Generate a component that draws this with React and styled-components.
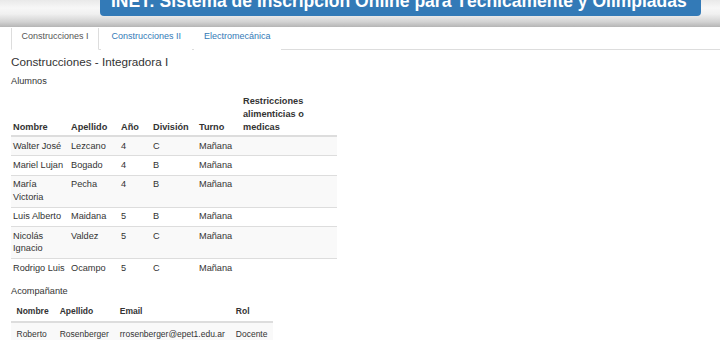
import styled, { createGlobalStyle } from "styled-components";

const GlobalStyle = createGlobalStyle`
  body {
    margin: 0;
    background: #fff;
    font-family: "Liberation Sans", Arial, sans-serif;
    color: #333;
  }
`;

const alumnos = [
  ["Walter José", "Lezcano", "4", "C", "Mañana"],
  ["Mariel Lujan", "Bogado", "4", "B", "Mañana"],
  ["María Victoria", "Pecha", "4", "B", "Mañana"],
  ["Luis Alberto", "Maidana", "5", "B", "Mañana"],
  ["Nicolás Ignacio", "Valdez", "5", "C", "Mañana"],
  ["Rodrigo Luis", "Ocampo", "5", "C", "Mañana"],
];

const columnas = [
  ["Nombre", 58],
  ["Apellido", 50],
  ["Año", 32],
  ["División", 46],
  ["Turno", 44],
  ["Restricciones alimenticias o medicas", 96],
];

const tabs = ["Construcciones I", "Construcciones II", "Electromecánica"];

export default function App() {
  return (
    <>
      <GlobalStyle />
      <Header>
        <Banner>INET: Sistema de Inscripción Online para Técnicamente y Olimpiadas</Banner>
      </Header>
      <Content>
        <Tabs>
          {tabs.map((t, i) => (
            <Tab key={t} $active={i === 0}>
              {t}
            </Tab>
          ))}
        </Tabs>
        <Heading>Construcciones - Integradora I</Heading>
        <Label>Alumnos</Label>
        <StudentTable>
          <colgroup>
            {columnas.map(([name, w]) => (
              <col key={name} style={{ width: w }} />
            ))}
          </colgroup>
          <thead>
            <tr>
              {columnas.map(([name]) => (
                <th key={name}>{name}</th>
              ))}
            </tr>
          </thead>
          <tbody>
            {alumnos.map((row) => (
              <tr key={row[0]}>
                {row.map((c, i) => (
                  <td key={i}>{c}</td>
                ))}
                <td />
              </tr>
            ))}
          </tbody>
        </StudentTable>
        <Label>Acompañante</Label>
        <CompanionTable>
          <thead>
            <tr>
              <th>Nombre</th>
              <th>Apellido</th>
              <th>Email</th>
              <th>Rol</th>
            </tr>
          </thead>
          <tbody>
            <tr>
              <td>Roberto</td>
              <td>Rosenberger</td>
              <td>rrosenberger@epet1.edu.ar</td>
              <td>Docente</td>
            </tr>
          </tbody>
        </CompanionTable>
      </Content>
    </>
  );
}

const Header = styled.header`
  position: relative;
  z-index: 2;
  display: flex;
  align-items: flex-start;
  height: 28px;
  padding-left: 100px;
  overflow: hidden;
  background: linear-gradient(
    to bottom,
    #e9e9e9 0px,
    #f7f7f7 8px,
    #f0f0f0 14px,
    #d2d2d2 22px,
    #b5b5b5 27px,
    #fff 27px
  );
`;

const Banner = styled.div`
  box-sizing: border-box;
  width: 601px;
  margin-top: -10px;
  padding: 0 0 4px 11px;
  background: #337ab7;
  border-radius: 0 0 4px 4px;
  color: #fff;
  font-size: 17.5px;
  font-weight: bold;
  line-height: 22px;
  white-space: nowrap;
  overflow: hidden;
`;

const Content = styled.main`
  padding-left: 11px;
`;

const Tabs = styled.nav`
  display: flex;
  margin-top: -5px;
  border-bottom: 1px solid #ddd;
`;

const Tab = styled.a`
  margin: 0 2px -1px 0;
  padding: 6px 9.5px;
  font-size: 9px;
  line-height: 13px;
  border: 1px solid ${(p) => (p.$active ? "#ddd" : "transparent")};
  border-bottom-color: transparent;
  border-radius: 3px 3px 0 0;
  background: #fff;
  color: ${(p) => (p.$active ? "#555" : "#337ab7")};
  cursor: pointer;
`;

const Heading = styled.h4`
  margin: 5px 0 6px;
  font-size: 11.7px;
  font-weight: normal;
  line-height: 14px;
`;

const Label = styled.p`
  margin: 0 0 4px;
  font-size: 9.2px;
  line-height: 13px;
`;

const BaseTable = styled.table`
  border-collapse: collapse;
  border-spacing: 0;

  th {
    text-align: left;
    vertical-align: bottom;
    font-weight: bold;
    border-bottom: 2px solid #ddd;
  }
  td {
    vertical-align: top;
    border-top: 1px solid #ddd;
  }
  tbody tr:nth-child(odd) {
    background: #f9f9f9;
  }
`;

const StudentTable = styled(BaseTable)`
  table-layout: fixed;
  width: 326px;
  margin: 1px 0 8px;
  font-size: 9.2px;

  th {
    padding: 3px 2px 1px;
    line-height: 13px;
  }
  td {
    padding: 2.8px 2px;
    line-height: 12.7px;
  }
`;

const CompanionTable = styled(BaseTable)`
  margin-top: 0;
  font-size: 8.5px;
  line-height: 12px;

  th {
    padding: 3px 5.5px 4px;
    white-space: nowrap;
  }
  td {
    padding: 5px 5.5px;
    white-space: nowrap;
  }
`;
